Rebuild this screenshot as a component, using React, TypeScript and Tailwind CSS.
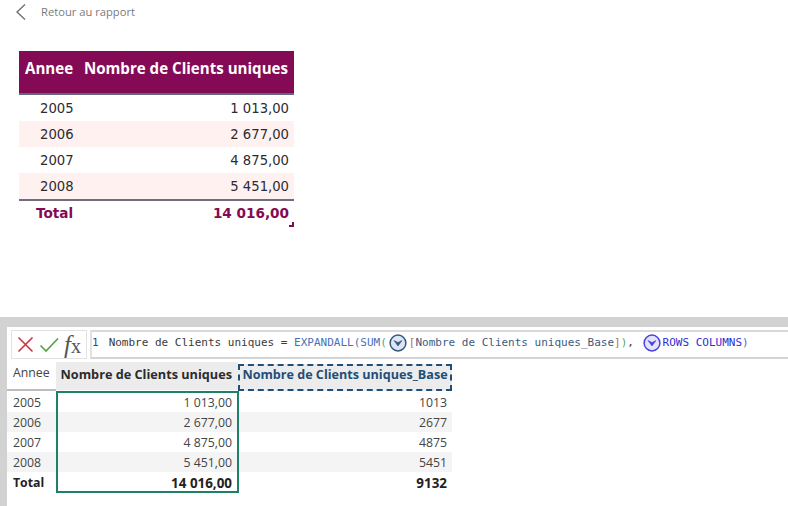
const reportRows = [
  ["2005", "1 013,00"],
  ["2006", "2 677,00"],
  ["2007", "4 875,00"],
  ["2008", "5 451,00"],
]

const dataRows = [
  ["2005", "1 013,00", "1013"],
  ["2006", "2 677,00", "2677"],
  ["2007", "4 875,00", "4875"],
  ["2008", "5 451,00", "5451"],
]

function ChevronBadge({color, fill}: {color: string; fill: string}) {
  return (
    <svg width="18" height="18" viewBox="0 0 18 18" className="shrink-0">
      <circle cx="9" cy="9" r="7.9" fill={fill} stroke={color} strokeWidth="1.5" />
      <path d="M5 6.5 L9 12 L13 6.5 L9 8.6 Z" fill={color} stroke={color} strokeWidth="0.6" />
    </svg>
  )
}

export default function App() {
  return (
    <div className="flex h-[506px] w-[788px] flex-col overflow-hidden bg-white">
      <div className="h-[317px] shrink-0 pl-[19px]">
        <div className="flex h-[24px] items-center">
          <svg width="12" height="18" viewBox="0 0 12 18" className="-ml-[4px]">
            <path d="M10 1.5 L2 9 L10 16.5" fill="none" stroke="#6b6b6b" strokeWidth="1.3" />
          </svg>
          <span className="ml-[14px] font-['Open_Sans',sans-serif] text-[11.2px] text-[#7b7b7b]">Retour au rapport</span>
        </div>

        <div className="mt-[27px] w-[275px] font-['DejaVu_Sans',sans-serif]">
          <div className="flex h-[44px] items-center justify-between border-b-2 border-[#5f6a80] bg-[#850a55] px-[6px] pb-[8px] font-['Open_Sans',sans-serif] text-[15.1px] font-bold text-white">
            <span>Annee</span>
            <span>Nombre de Clients uniques</span>
          </div>
          {reportRows.map(([year, value], i) => (
            <div
              key={year}
              className={`flex h-[26px] items-center justify-between pt-[2px] pr-[5px] pl-[21px] text-[13.2px] text-[#2b2b33] ${i % 2 === 1 ? "bg-[#fff1ef]" : ""}`}
            >
              <span>{year}</span>
              <span>{value}</span>
            </div>
          ))}
          <div className="relative flex h-[27px] items-center justify-between border-t-2 border-[#6f6c82] pr-[5px] pl-[17px] text-[13.6px] font-bold text-[#850a55]">
            <span>Total</span>
            <span>14 016,00</span>
            <div className="absolute right-0 bottom-[-1px] h-[5px] w-[5px] border-r-2 border-b-2 border-[#850a55]" />
          </div>
        </div>
      </div>

      <div className="flex min-h-0 flex-1 flex-col border-t-[10px] border-l-[7px] border-[#d2d2d2]">
        <div className="flex h-[32px] shrink-0 gap-[3px] pt-[3px] pl-[4px]">
          <div className="flex h-[29px] w-[76px] items-center gap-[5px] border border-[#e2e2e2] pl-[5px]">
            <svg width="17" height="17" viewBox="0 0 17 17">
              <path d="M1.5 1.5 L15.5 15.5 M15.5 1.5 L1.5 15.5" stroke="#c8363f" strokeWidth="1.6" fill="none" />
            </svg>
            <svg width="20" height="16" viewBox="0 0 20 16">
              <path d="M1.5 8.5 L7 14 L19 1.5" stroke="#5aa34a" strokeWidth="1.7" fill="none" />
            </svg>
            <span className="font-['Liberation_Serif',serif] text-[25px] leading-none text-[#555] italic">f<span className="text-[20px] not-italic">x</span></span>
          </div>
          <div className="flex h-[29px] flex-1 items-start border-t-[2px] border-b-2 border-l-2 border-t-[#d9d9d9] border-b-[#d4d4d4] border-l-[#e2e2e2] pt-[3px] font-['DejaVu_Sans_Mono',monospace] text-[11px] whitespace-pre text-[#3a3a3a]">
            <span className="mr-[10px] text-[#3a3f9f]">1</span>
            <span>Nombre de Clients uniques = </span>
            <span className="text-[#4a6fb5]">EXPANDALL(SUM</span>
            <span className="text-[#5aa36a]">(</span>
            <span className="-mt-[1px] ml-[2px] mr-[2px]"><ChevronBadge color="#35577f" fill="#dfe6f3" /></span>
            <span className="text-[#b3773a]">[</span>
            <span className="text-[#3d5a80]">Nombre de Clients uniques_Base</span>
            <span className="text-[#b3773a]">]</span>
            <span className="text-[#5aa36a]">)</span>
            <span>, </span>
            <span className="-mt-[1px] ml-[2px] mr-[2px]"><ChevronBadge color="#4a3fe0" fill="#e3e3fb" /></span>
            <span className="text-[#2f2fd0]">ROWS COLUMNS</span>
            <span className="text-[#4a6fb5]">)</span>
          </div>
        </div>

        <div className="mt-[3px] w-[445px] font-['Open_Sans',sans-serif] text-[12.3px] text-[#444]">
          <div className="flex h-[30px] items-stretch">
            <div className="flex h-[29px] w-[49px] items-center border-b-2 border-[#bdbdbd] pb-[5px] pl-[6px]">Annee</div>
            <div className="flex h-[28px] w-[182px] items-center justify-end bg-[#ececec] pr-[6px] pb-[3px] text-[12.7px] font-bold text-[#2b2b2b]">Nombre de Clients uniques</div>
            <div className="mt-[2px] flex h-[27px] w-[214px] items-center justify-center border-2 border-dashed border-[#1f4e79] bg-[#ececec] pb-[4px] text-[12.6px] font-bold text-[#1f4e79]">Nombre de Clients uniques_Base</div>
          </div>
          <div className="relative">
            {dataRows.map(([year, value, base], i) => (
              <div key={year} className={`flex h-[20px] items-center pt-[2px] ${i % 2 === 1 ? "bg-[#f4f4f4]" : ""}`}>
                <div className="w-[49px] pl-[6px]">{year}</div>
                <div className="w-[182px] pr-[6px] text-right">{value}</div>
                <div className="w-[214px] pr-[5px] text-right">{base}</div>
              </div>
            ))}
            <div className="flex h-[20px] items-center pt-[2px] font-bold text-[#222]">
              <div className="w-[49px] pl-[6px]">Total</div>
              <div className="w-[182px] pr-[6px] text-right text-[13.4px]">14 016,00</div>
              <div className="w-[214px] pr-[5px] text-right text-[13.4px]">9132</div>
            </div>
            <div className="absolute -top-[1px] left-[49px] h-[102px] w-[183px] border-2 border-[#1f8068]" />
          </div>
        </div>
      </div>
    </div>
  )
}
